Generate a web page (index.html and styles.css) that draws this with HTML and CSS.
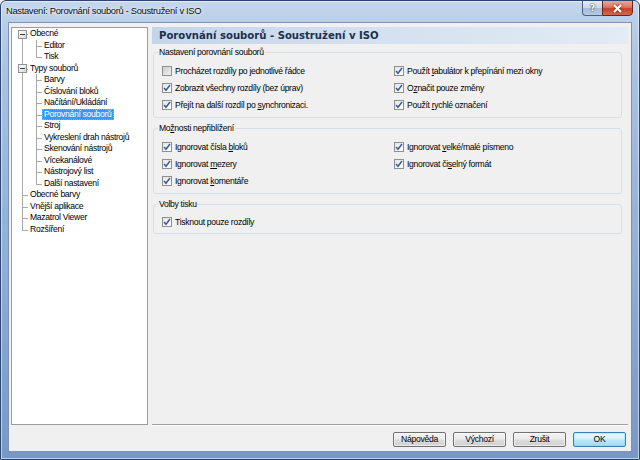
FILE: index.html
```html
<!DOCTYPE html>
<html lang="cs">
<head>
<meta charset="utf-8">
<title>Nastavení</title>
<link rel="stylesheet" href="styles.css">
</head>
<body>
<div class="window">
  <div class="titlebar">
    <span class="title">Nastavení: Porovnání souborů - Soustružení v ISO</span>
    <div class="caption-buttons">
      <span class="cbtn help">?</span>
      <span class="cbtn close"><svg width="11" height="9" viewBox="0 0 11 9"><path d="M2 1 L9 8 M9 1 L2 8" stroke="#fff" stroke-width="2.2" fill="none"/></svg></span>
    </div>
  </div>
  <div class="client">
    <div class="main">
      <div class="tree-box">
        <ul class="tree">
          <li><span class="exp"></span><span class="lbl">Obecné</span>
            <ul class="sub">
              <li><span class="lbl">Editor</span></li>
              <li><span class="lbl">Tisk</span></li>
            </ul>
          </li>
          <li><span class="exp"></span><span class="lbl">Typy souborů</span>
            <ul class="sub">
              <li><span class="lbl">Barvy</span></li>
              <li><span class="lbl">Číslování bloků</span></li>
              <li><span class="lbl">Načítání/Ukládání</span></li>
              <li><span class="lbl sel">Porovnání souborů</span></li>
              <li><span class="lbl">Stroj</span></li>
              <li><span class="lbl">Vykreslení drah nástrojů</span></li>
              <li><span class="lbl">Skenování nástrojů</span></li>
              <li><span class="lbl">Vícekanálové</span></li>
              <li><span class="lbl">Nástrojový list</span></li>
              <li><span class="lbl">Další nastavení</span></li>
            </ul>
          </li>
          <li><span class="lbl">Obecné barvy</span></li>
          <li><span class="lbl">Vnější aplikace</span></li>
          <li><span class="lbl">Mazatrol Viewer</span></li>
          <li><span class="lbl">Rozšíření</span></li>
        </ul>
      </div>
      <div class="pane">
        <div class="header">Porovnání souborů - Soustružení v ISO</div>

        <fieldset class="group">
          <legend>Nastavení porovnání souborů</legend>
          <div class="opts">
            <div class="cb"><span class="box off"></span><span>Procházet rozdíly po <u>j</u>ednotlivé řádce</span></div>
            <div class="cb"><span class="box"><svg width="8" height="8" viewBox="0 0 8 8"><path d="M1 4 L3 6.3 L7 1" fill="none" stroke="#3b5b9d" stroke-width="1.5"/></svg></span><span>Použít <u>t</u>abulátor k přepínání mezi okny</span></div>
            <div class="cb"><span class="box"><svg width="8" height="8" viewBox="0 0 8 8"><path d="M1 4 L3 6.3 L7 1" fill="none" stroke="#3b5b9d" stroke-width="1.5"/></svg></span><span>Zobrazit všechny rozdíly (bez úprav)</span></div>
            <div class="cb"><span class="box"><svg width="8" height="8" viewBox="0 0 8 8"><path d="M1 4 L3 6.3 L7 1" fill="none" stroke="#3b5b9d" stroke-width="1.5"/></svg></span><span>O<u>z</u>načit pouze změny</span></div>
            <div class="cb"><span class="box"><svg width="8" height="8" viewBox="0 0 8 8"><path d="M1 4 L3 6.3 L7 1" fill="none" stroke="#3b5b9d" stroke-width="1.5"/></svg></span><span>Přejít na další rozdíl po <u>s</u>ynchronizaci.</span></div>
            <div class="cb"><span class="box"><svg width="8" height="8" viewBox="0 0 8 8"><path d="M1 4 L3 6.3 L7 1" fill="none" stroke="#3b5b9d" stroke-width="1.5"/></svg></span><span>Použít <u>r</u>ychlé označení</span></div>
          </div>
        </fieldset>

        <fieldset class="group">
          <legend>Mo<u>ž</u>nosti nepřiblížení</legend>
          <div class="opts">
            <div class="cb"><span class="box"><svg width="8" height="8" viewBox="0 0 8 8"><path d="M1 4 L3 6.3 L7 1" fill="none" stroke="#3b5b9d" stroke-width="1.5"/></svg></span><span>Ignorovat čísla <u>b</u>loků</span></div>
            <div class="cb"><span class="box"><svg width="8" height="8" viewBox="0 0 8 8"><path d="M1 4 L3 6.3 L7 1" fill="none" stroke="#3b5b9d" stroke-width="1.5"/></svg></span><span>Ignorovat <u>v</u>elké/malé písmeno</span></div>
            <div class="cb"><span class="box"><svg width="8" height="8" viewBox="0 0 8 8"><path d="M1 4 L3 6.3 L7 1" fill="none" stroke="#3b5b9d" stroke-width="1.5"/></svg></span><span>Ignorovat <u>m</u>ezery</span></div>
            <div class="cb"><span class="box"><svg width="8" height="8" viewBox="0 0 8 8"><path d="M1 4 L3 6.3 L7 1" fill="none" stroke="#3b5b9d" stroke-width="1.5"/></svg></span><span>Ignorovat či<u>s</u>elný formát</span></div>
            <div class="cb"><span class="box"><svg width="8" height="8" viewBox="0 0 8 8"><path d="M1 4 L3 6.3 L7 1" fill="none" stroke="#3b5b9d" stroke-width="1.5"/></svg></span><span>Ignorovat <u>k</u>omentáře</span></div>
          </div>
        </fieldset>

        <fieldset class="group last">
          <legend>Volby tisku</legend>
          <div class="opts">
            <div class="cb"><span class="box"><svg width="8" height="8" viewBox="0 0 8 8"><path d="M1 4 L3 6.3 L7 1" fill="none" stroke="#3b5b9d" stroke-width="1.5"/></svg></span><span>Tisknout pouze rozdíly</span></div>
          </div>
        </fieldset>
      </div>
    </div>
    <div class="buttons">
      <button class="btn">Nápověda</button>
      <button class="btn">Výchozí</button>
      <button class="btn">Zrušit</button>
      <button class="btn default">OK</button>
    </div>
  </div>
</div>
</body>
</html>
```

FILE: styles.css
```css
html, body {
  margin: 0;
  padding: 0;
}

body {
  font-family: "Liberation Sans", Arial, sans-serif;
  font-size: 8.6px;
  letter-spacing: -0.3px;
  color: #000;
}

.window {
  width: 640px;
  height: 460px;
  box-sizing: border-box;
  display: flex;
  flex-direction: column;
  border: 1px solid #2b466e;
  border-radius: 6px 6px 0 0;
  background: linear-gradient(180deg, #c4d7ed 0px, #b9cee8 21px, #a7c1e1 80px, #8faed7 260px, #7797c6 459px);
  box-shadow: inset 0 0 0 1px rgba(255, 255, 255, 0.55);
  overflow: hidden;
}

/* ---------- title bar ---------- */
.titlebar {
  height: 21px;
  flex: none;
  display: flex;
  justify-content: space-between;
  align-items: flex-start;
  padding-left: 5px;
}

.title {
  font-size: 9.4px;
  letter-spacing: -0.33px;
  line-height: 20px;
  color: #0a0a0a;
  text-shadow: 0 0 5px rgba(255, 255, 255, 0.95), 0 0 2px rgba(255, 255, 255, 0.9);
}

.caption-buttons {
  display: flex;
  margin-right: 6px;
  margin-top: -1px;
}

.cbtn {
  height: 16px;
  box-sizing: border-box;
  display: flex;
  align-items: center;
  justify-content: center;
  letter-spacing: 0;
}

.cbtn.help {
  width: 20px;
  border: 1px solid #4b6184;
  border-right: none;
  border-radius: 0 0 0 4px;
  background: linear-gradient(180deg, #e4ecf5 0%, #c9d7e8 48%, #a8bcd6 52%, #b6cbe3 100%);
  color: #fff;
  font-family: "DejaVu Sans", sans-serif;
  font-weight: bold;
  font-size: 9px;
  text-shadow: 0 0 2px #2c3e5c, 0 0 1px #2c3e5c;
}

.cbtn.close {
  width: 31px;
  border: 1px solid #6b2418;
  border-radius: 0 0 4px 0;
  background: linear-gradient(180deg, #e9a899 0%, #d8775f 45%, #c4402a 55%, #d56a4c 100%);
}

.cbtn.close svg {
  filter: drop-shadow(0 0 1px #5a1a10);
}

/* ---------- client ---------- */
.client {
  flex: 1;
  margin: 0 7px 7px 7px;
  border: 1px solid #7c93b4;
  background: #f0f0f0;
  padding: 4px 3px 4px 2px;
  display: flex;
  flex-direction: column;
}

.main {
  display: flex;
  gap: 4px;
  height: 398px;
}

/* ---------- tree ---------- */
.tree-box {
  width: 137px;
  height: 398px;
  box-sizing: border-box;
  border: 1px solid #9c9c9c;
  background: #fff;
  flex: none;
}

.tree,
.tree ul {
  list-style: none;
  margin: 0;
  padding: 0;
}

.tree li {
  position: relative;
}

.tree > li {
  padding-left: 16px;
}

.sub > li {
  padding-left: 14px;
}

.tree li::before,
.tree li::after {
  content: "";
  position: absolute;
  border-color: #a8a8a8;
  border-style: solid;
  border-width: 0;
}

.tree > li::before {
  left: 10px;
  top: 0;
  bottom: 0;
  border-left-width: 1px;
}

.tree > li:first-child::before {
  top: 6px;
}

.tree > li:last-child::before {
  bottom: auto;
  height: 6px;
}

.tree > li::after {
  left: 10px;
  top: 6px;
  width: 6px;
  border-top-width: 1px;
}

.sub > li::before {
  left: 8px;
  top: 0;
  bottom: 0;
  border-left-width: 1px;
}

.sub > li:last-child::before {
  bottom: auto;
  height: 6px;
}

.sub > li::after {
  left: 8px;
  top: 6px;
  width: 6px;
  border-top-width: 1px;
}

.lbl {
  display: block;
  width: max-content;
  height: 11.5px;
  line-height: 11.5px;
  padding: 0 2px;
}

.lbl.sel {
  background: #3399ff;
  color: #fff;
  outline: 1px dotted #d9a54a;
  outline-offset: -1px;
}

.exp {
  position: absolute;
  left: 6px;
  top: 1.5px;
  width: 9px;
  height: 9px;
  box-sizing: border-box;
  border: 1px solid #919191;
  background: linear-gradient(135deg, #ffffff 0%, #e9e9e9 60%, #d4d4d4 100%);
  z-index: 1;
}

.exp::before {
  content: "";
  position: absolute;
  left: 1px;
  right: 1px;
  top: 3px;
  height: 1px;
  background: #3d3d3d;
}

/* ---------- right pane ---------- */
.pane {
  width: 477px;
  height: 398px;
  box-sizing: border-box;
  border-bottom: 1px solid #a0a0a0;
  box-shadow: 0 1px 0 #ffffff;
  display: flex;
  flex-direction: column;
}

.header {
  height: 17px;
  flex: none;
  padding-left: 7px;
  background: linear-gradient(90deg, #c3d5ea 0%, #d4e1f0 50%, #e3ebf5 100%);
  font-family: "DejaVu Sans", sans-serif;
  font-weight: bold;
  font-size: 10.1px;
  letter-spacing: 0;
  line-height: 17px;
  color: #1b2f4f;
}

.group {
  margin: 3px 6px 0 1px;
  padding: 0;
  border: 1px solid #d5dfe5;
  border-radius: 3px;
  min-width: 0;
}

.group + .group {
  margin-top: 5px;
}

.group legend {
  margin-left: 4px;
  padding: 0 1px;
  line-height: 11px;
}

.opts {
  display: grid;
  grid-template-columns: 232px 1fr;
  grid-auto-rows: 17px;
  padding: 4px 0 4px 8px;
}

.group.last .opts {
  padding-top: 3px;
  padding-bottom: 3px;
}

.cb {
  display: flex;
  align-items: center;
}

.box {
  width: 10px;
  height: 10px;
  box-sizing: border-box;
  border: 1px solid #8e8f8f;
  background: linear-gradient(135deg, #e3e3e3 0%, #f6f6f6 60%, #ffffff 100%);
  margin-right: 3px;
  display: flex;
  align-items: center;
  justify-content: center;
  flex: none;
}

.box.off {
  background: linear-gradient(135deg, #cfcfcf 0%, #e2e2e2 60%, #f0f0f0 100%);
}

u {
  text-decoration-thickness: 1px;
  text-underline-offset: 1px;
}

/* ---------- buttons ---------- */
.buttons {
  display: flex;
  justify-content: flex-end;
  gap: 7px;
  margin-top: 7px;
  padding-right: 2px;
}

.btn {
  width: 53px;
  height: 15px;
  padding: 0;
  margin: 0;
  box-sizing: border-box;
  font-family: inherit;
  font-size: 8.6px;
  letter-spacing: -0.3px;
  line-height: 13px;
  color: #000;
  border: 1px solid #707070;
  border-radius: 2px;
  background: linear-gradient(180deg, #f2f2f2 0%, #ebebeb 48%, #dddddd 52%, #cfcfcf 100%);
  box-shadow: inset 0 0 0 1px rgba(255, 255, 255, 0.6);
}

.btn.default {
  border-color: #3c7fb1;
  background: linear-gradient(180deg, #eaf6fd 0%, #d9f0fc 48%, #bee6fd 52%, #a7d9f5 100%);
  box-shadow: inset 0 0 0 1px #48e0ff55;
}
```
